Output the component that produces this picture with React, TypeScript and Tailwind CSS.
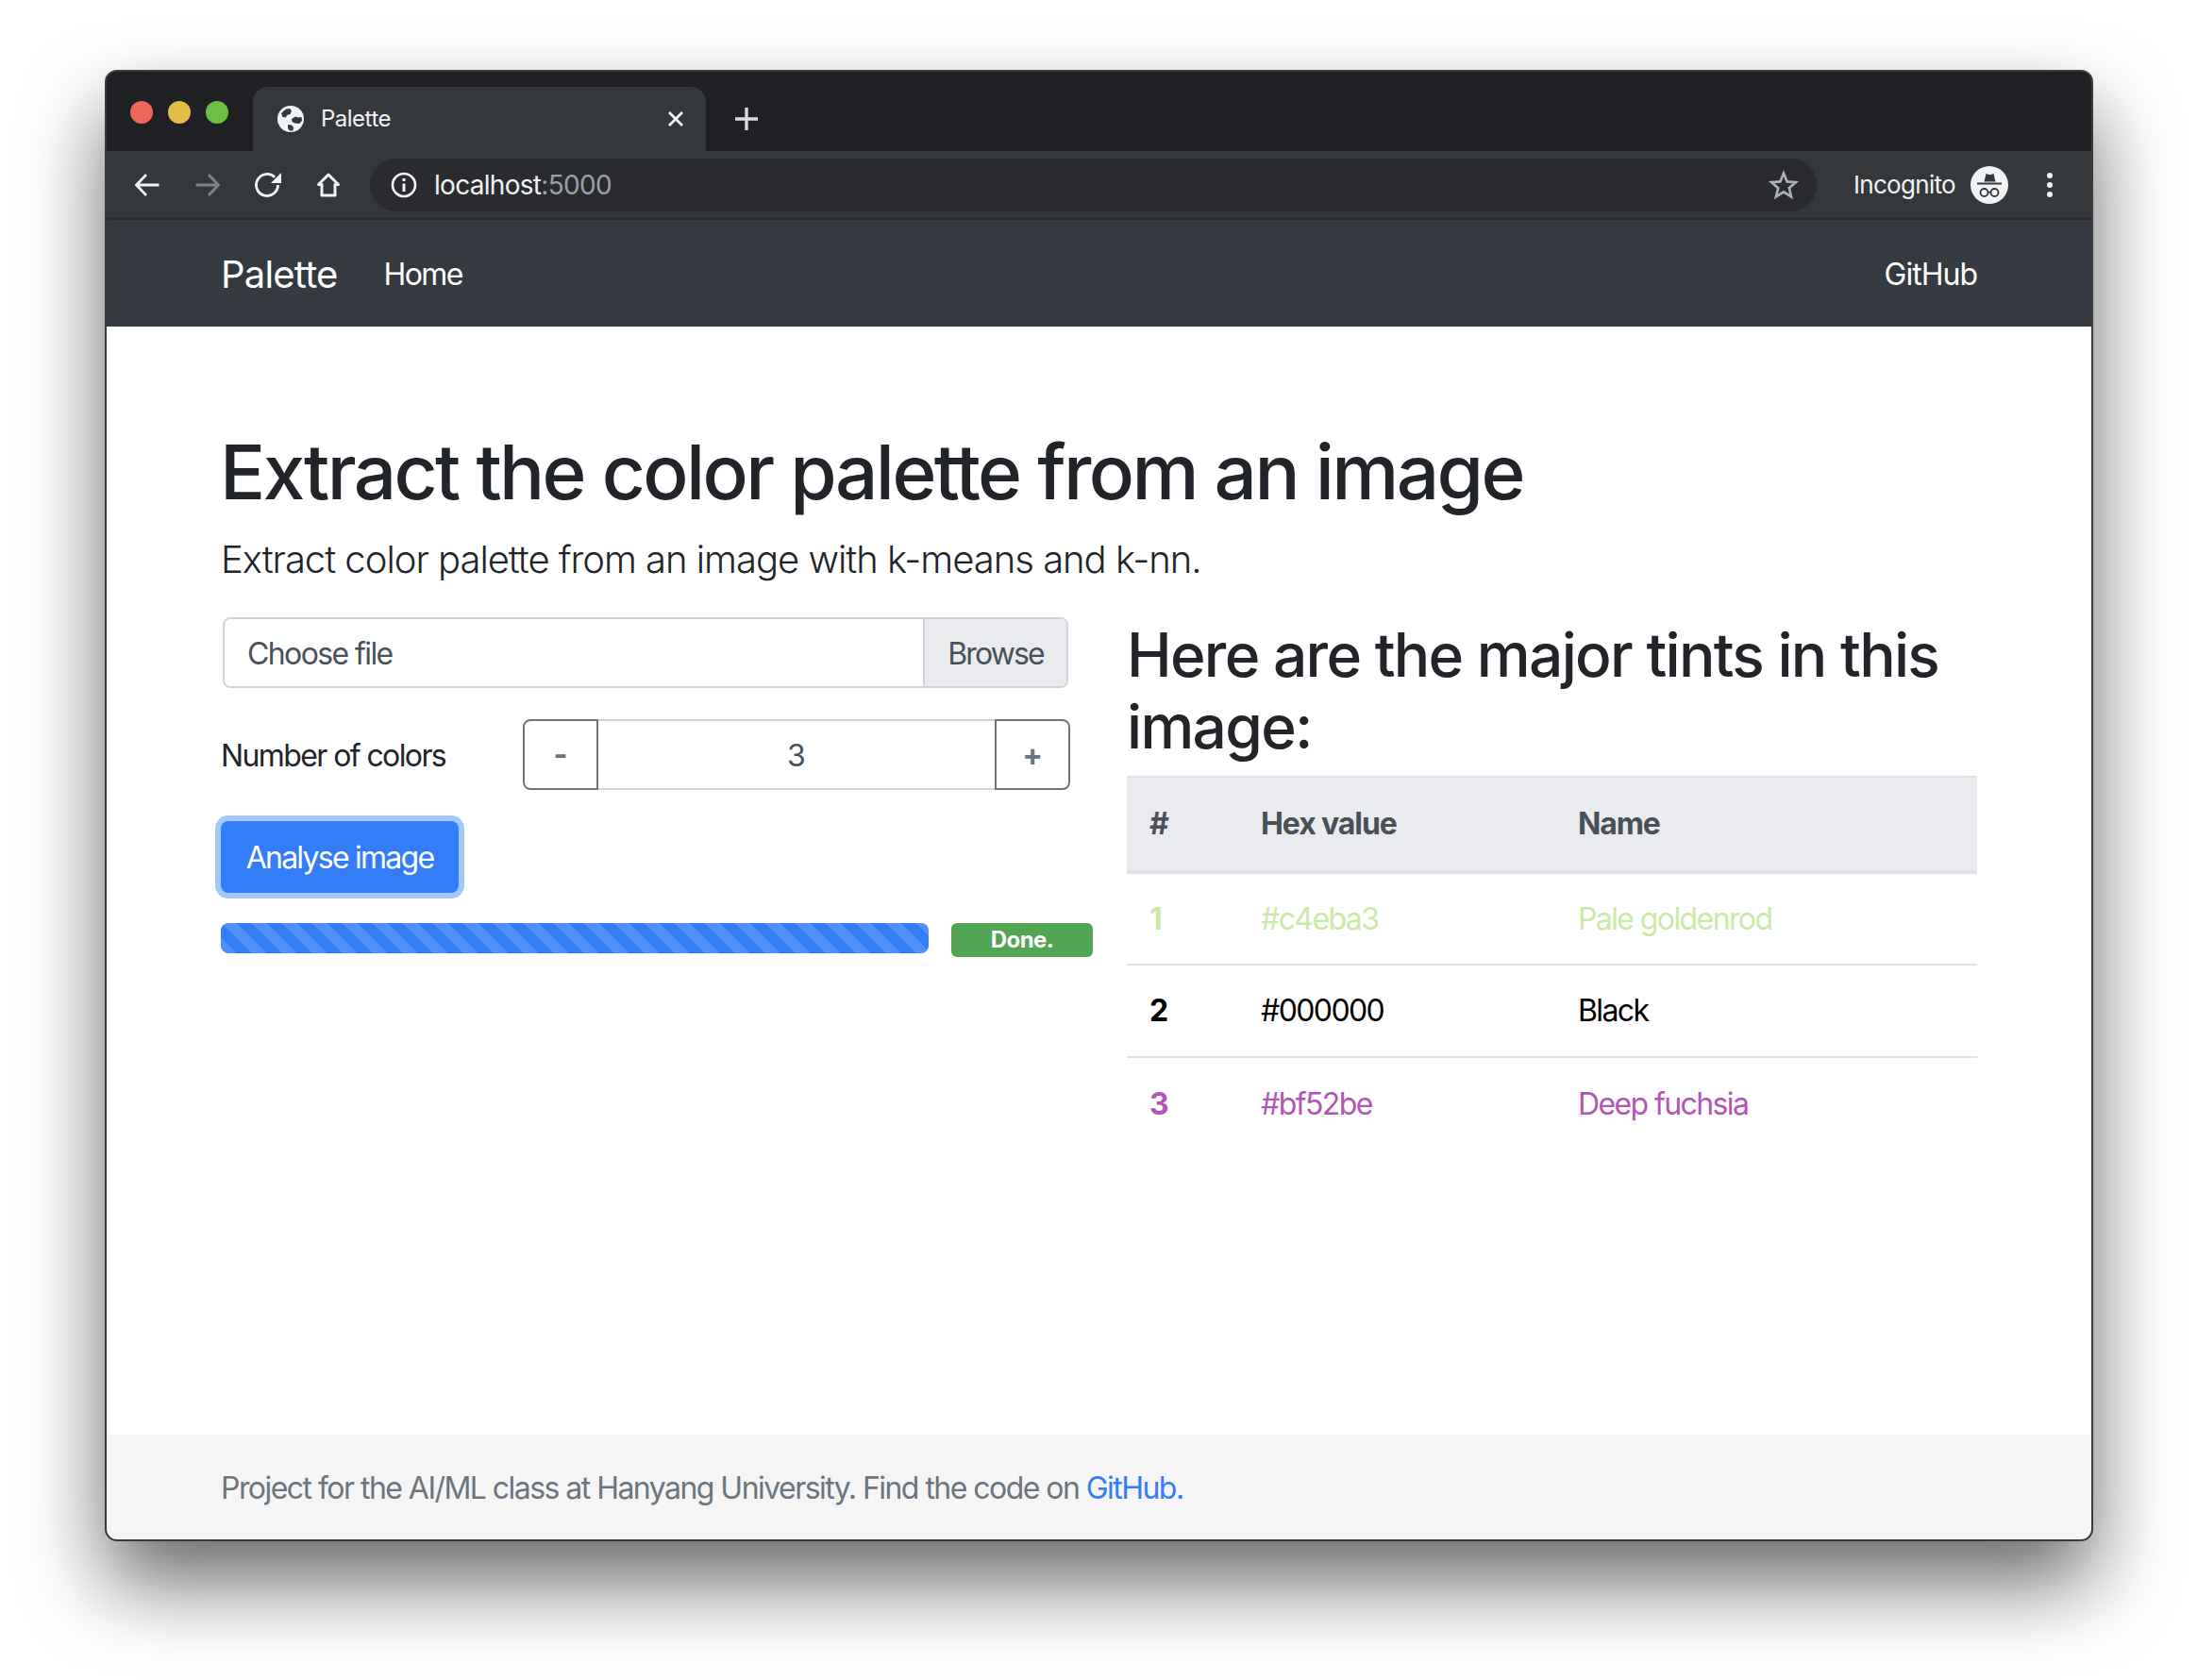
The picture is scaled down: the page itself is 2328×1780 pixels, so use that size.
import React from 'react';

const sf = "font-['Inter',sans-serif]";

const rows = [
  { id: 1, hex: '#c4eba3', name: 'Pale goldenrod', cls: 'text-[#cbe9a6]' },
  { id: 2, hex: '#000000', name: 'Black', cls: 'text-black' },
  { id: 3, hex: '#bf52be', name: 'Deep fuchsia', cls: 'text-[#b455b6]' },
];

const Globe = () => (
  <svg width="30" height="30" viewBox="0 0 30 30">
    <circle cx="15" cy="15" r="14" fill="#f1f3f4" />
    <path d="M5 9 L10 4.500 L14 4 L16 6.500 L14.500 10 L11 11 L10 13.500 L6.500 13 Z" fill="#35383b" />
    <path d="M16 15 L20 12.500 L23 13.500 L26.500 13 L27 17 L24 20 L19 19.500 L16.500 18 Z" fill="#35383b" />
    <path d="M12 21 L16 21.500 L18 24 L17.500 27.500 L14 27.500 L12 25 Z" fill="#35383b" />
  </svg>
);

const Icon = ({ children, cls = 'text-[#f1f3f4]' }: { children: React.ReactNode; cls?: string }) => (
  <svg width="32" height="32" viewBox="0 0 32 32" fill="none" stroke="currentColor" strokeWidth="2.8" className={cls}>
    {children}
  </svg>
);

function Chrome() {
  return (
    <div className={`${sf} text-[#f1f3f4]`}>
      <div className="h-[85px] bg-[#202124] flex items-start">
        <div className="flex gap-[16px] pl-[26px] pt-[32px] w-[156px]">
          <span className="w-[24px] h-[24px] rounded-full bg-[#f0655c]" />
          <span className="w-[24px] h-[24px] rounded-full bg-[#e2bd49]" />
          <span className="w-[24px] h-[24px] rounded-full bg-[#6cbe45]" />
        </div>
        <div className="mt-[17px] h-[68px] w-[480px] bg-[#35383b] rounded-t-[16px] flex items-center pl-[25px] pr-[22px]">
          <Globe />
          <span className="ml-[17px] text-[24px] tracking-[-0.5px]">Palette</span>
          <svg width="20" height="20" viewBox="0 0 20 20" className="ml-auto" stroke="currentColor" strokeWidth="2.8">
            <path d="M3 3 L17 17 M17 3 L3 17" />
          </svg>
        </div>
        <svg width="26" height="26" viewBox="0 0 26 26" className="ml-[30px] mt-[38px]" stroke="#dadce0" strokeWidth="3.4">
          <path d="M13 1 V25 M1 13 H25" />
        </svg>
      </div>
      <div className="h-[73px] bg-[#35383b] border-b-2 border-[#2a2c2f] flex items-center">
        <div className="flex items-center gap-[32px] pl-[28px] w-[280px]">
          <Icon><path d="M28.500 16 H5 M15 5 L4.500 16 L15 27" /></Icon>
          <Icon cls="text-[#7f8184]"><path d="M3.500 16 H27 M17 5 L27.500 16 L17 27" /></Icon>
          <Icon>
            <path d="M23.100 7.800 A11.500 11.500 0 1 0 26.500 16" />
            <path d="M30 3 V14 H19 Z" fill="currentColor" stroke="none" />
          </Icon>
          <Icon><path d="M16 5 L5.500 15.500 H9 V27 H23 V15.500 H26.500 Z" strokeWidth="3" strokeLinejoin="round" /></Icon>
        </div>
        <div className="w-[1533px] h-[56px] rounded-full bg-[#292b2e] flex items-center pl-[22px] pr-[19px]">
          <svg width="28" height="28" viewBox="0 0 28 28" fill="none" stroke="currentColor" strokeWidth="2.6">
            <circle cx="14" cy="14" r="12" />
            <path d="M14 12.500 V21 M14 7 V10" strokeWidth="3" />
          </svg>
          <span className="ml-[18px] text-[28px] tracking-[-0.7px]">localhost<span className="text-[#9aa0a6]">:5000</span></span>
          <svg width="32" height="32" viewBox="0 0 32 32" fill="none" stroke="#aeb1b5" strokeWidth="2.6" className="ml-auto">
            <path d="M16 3.500 L19.600 12.400 L29 13.100 L21.800 19.200 L24.100 28.400 L16 23.400 L7.900 28.400 L10.200 19.200 L3 13.100 L12.400 12.400 Z" />
          </svg>
        </div>
        <span className="ml-[39px] w-[109px] text-[26px] tracking-[-0.7px]">Incognito</span>
        <svg width="40" height="40" viewBox="0 0 40 40" className="ml-[15px]">
          <circle cx="20" cy="20" r="20" fill="#f1f3f4" />
          <path d="M16.500 8 L19.500 9 H21.500 L24.500 8 L26.500 16.500 H14.500 Z" fill="#35383b" />
          <rect x="7" y="17.500" width="26" height="2" fill="#35383b" />
          <circle cx="14.500" cy="28" r="4" fill="none" stroke="#35383b" strokeWidth="1.800" />
          <circle cx="25.500" cy="28" r="4" fill="none" stroke="#35383b" strokeWidth="1.800" />
          <rect x="18" y="26.800" width="4" height="1.600" fill="#35383b" />
        </svg>
        <div className="ml-[41px] flex flex-col gap-[4px]">
          <span className="w-[6px] h-[6px] rounded-full bg-[#f1f3f4]" />
          <span className="w-[6px] h-[6px] rounded-full bg-[#f1f3f4]" />
          <span className="w-[6px] h-[6px] rounded-full bg-[#f1f3f4]" />
        </div>
      </div>
    </div>
  );
}

export default function App() {
  return (
    <div className={`w-[2328px] h-[1780px] bg-white pl-[112px] pt-[75px] overflow-hidden ${sf}`}>
      <div className="w-[2105px] h-[1557px] rounded-[12px] overflow-hidden flex flex-col bg-white shadow-[0_44px_88px_rgba(0,0,0,0.6)] outline-2 -outline-offset-1 outline-[#3a3a3a]">
        <Chrome />
        <nav className="h-[113px] bg-[#353a41] flex items-center pl-[122px] pr-[122px] pt-[2px] text-white shrink-0">
          <span className="text-[40px] tracking-[-0.8px]">Palette</span>
          <span className="ml-[49px] text-[32px] tracking-[-1.6px]">Home</span>
          <span className="ml-auto text-[32px] tracking-[-1px]">GitHub</span>
        </nav>
        <main className="flex-1 pt-[106px] pl-[122px] pr-[122px] text-[#212529]">
          <h1 className="-ml-[1px] text-[80px] leading-[96px] font-medium tracking-[-2.6px]">Extract the color palette from an image</h1>
          <p className="mt-[14px] pt-[1px] text-[40px] leading-[60px] font-light tracking-[-1.02px]">Extract color palette from an image with k-means and k-nn.</p>
          <div className="mt-[31px] flex">
            <div className="w-[930px] shrink-0 mr-[30px]">
              <div className="w-[896px] ml-[2px] h-[75px] flex border-2 border-[#ced4da] rounded-[8px] text-[32px] text-[#495057] overflow-hidden tracking-[-1.6px]">
                <span className="flex-1 flex items-center pl-[24px] pt-[2px]">Choose file</span>
                <span className="w-[152px] flex items-center justify-center pt-[2px] bg-[#eaebef] border-l-2 border-[#ced4da] tracking-[-1.9px]">Browse</span>
              </div>
              <div className="mt-[33px] flex items-center">
                <span className="w-[320px] pt-[2px] text-[32px] tracking-[-1.6px]">Number of colors</span>
                <div className="flex h-[75px] w-[580px] text-[#495057]">
                  <span className="w-[80px] flex items-center justify-center border-2 border-[#6c757d] rounded-l-[8px] text-[#6c757d] text-[32px] font-bold">-</span>
                  <span className="flex-1 flex items-center justify-center pt-[2px] border-y-2 border-[#ced4da] text-[32px]">3</span>
                  <span className="w-[80px] flex items-center justify-center border-2 border-[#6c757d] rounded-r-[8px] text-[#6c757d] text-[32px] font-bold">+</span>
                </div>
              </div>
              <button className="mt-[33px] block h-[76px] w-[252px] pt-[2px] bg-[#337df8] text-white rounded-[8px] text-[32px] tracking-[-1.75px] ring-[6px] ring-[#a3c7fb]">Analyse image</button>
              <div className="mt-[32px] flex items-start">
                <div className="w-[750px] h-[32px] rounded-[8px] bg-[#337df8] bg-[linear-gradient(45deg,rgba(255,255,255,0.15)_25%,transparent_25%,transparent_50%,rgba(255,255,255,0.15)_50%,rgba(255,255,255,0.15)_75%,transparent_75%,transparent)] bg-[length:32px_32px]" />
                <span className="ml-[24px] w-[150px] h-[36px] rounded-[6px] bg-[#52a552] text-white text-[24px] font-bold flex items-center justify-center tracking-[-0.6px]">Done.</span>
              </div>
            </div>
            <div className="flex-1">
              <h2 className="pt-[2px] text-[64px] leading-[76px] font-medium tracking-[-1.7px]">Here are the major tints in this image:</h2>
              <table className="mt-[14px] w-full border-collapse table-fixed text-[32px] tracking-[-1.6px]">
                <thead>
                  <tr className="h-[101px] bg-[#eaebef] text-[#495057] border-t-2 border-b-4 border-[#dfe2e6] text-left">
                    <th className="w-[118px] pl-[24px] font-bold">#</th>
                    <th className="w-[336px] pl-[24px] font-bold tracking-[-1.1px]">Hex value</th>
                    <th className="pl-[24px] font-bold tracking-[-1.1px]">Name</th>
                  </tr>
                </thead>
                <tbody>
                  {rows.map(r => (
                    <tr key={r.id} className={`h-[98px] border-b-2 border-[#dfe2e6] last:border-b-0 ${r.cls}`}>
                      <td className="pl-[24px] font-bold">{r.id}</td>
                      <td className="pl-[24px]">{r.hex}</td>
                      <td className="pl-[24px]">{r.name}</td>
                    </tr>
                  ))}
                </tbody>
              </table>
            </div>
          </div>
        </main>
        <footer className="h-[112px] bg-[#f5f5f5] flex items-center pl-[122px] pt-[2px] text-[32px] text-[#6c757d] tracking-[-1.54px] shrink-0">
          <p>Project for the AI/ML class at Hanyang University. Find the code on <a className="text-[#337df8]">GitHub.</a></p>
        </footer>
      </div>
    </div>
  );
}
